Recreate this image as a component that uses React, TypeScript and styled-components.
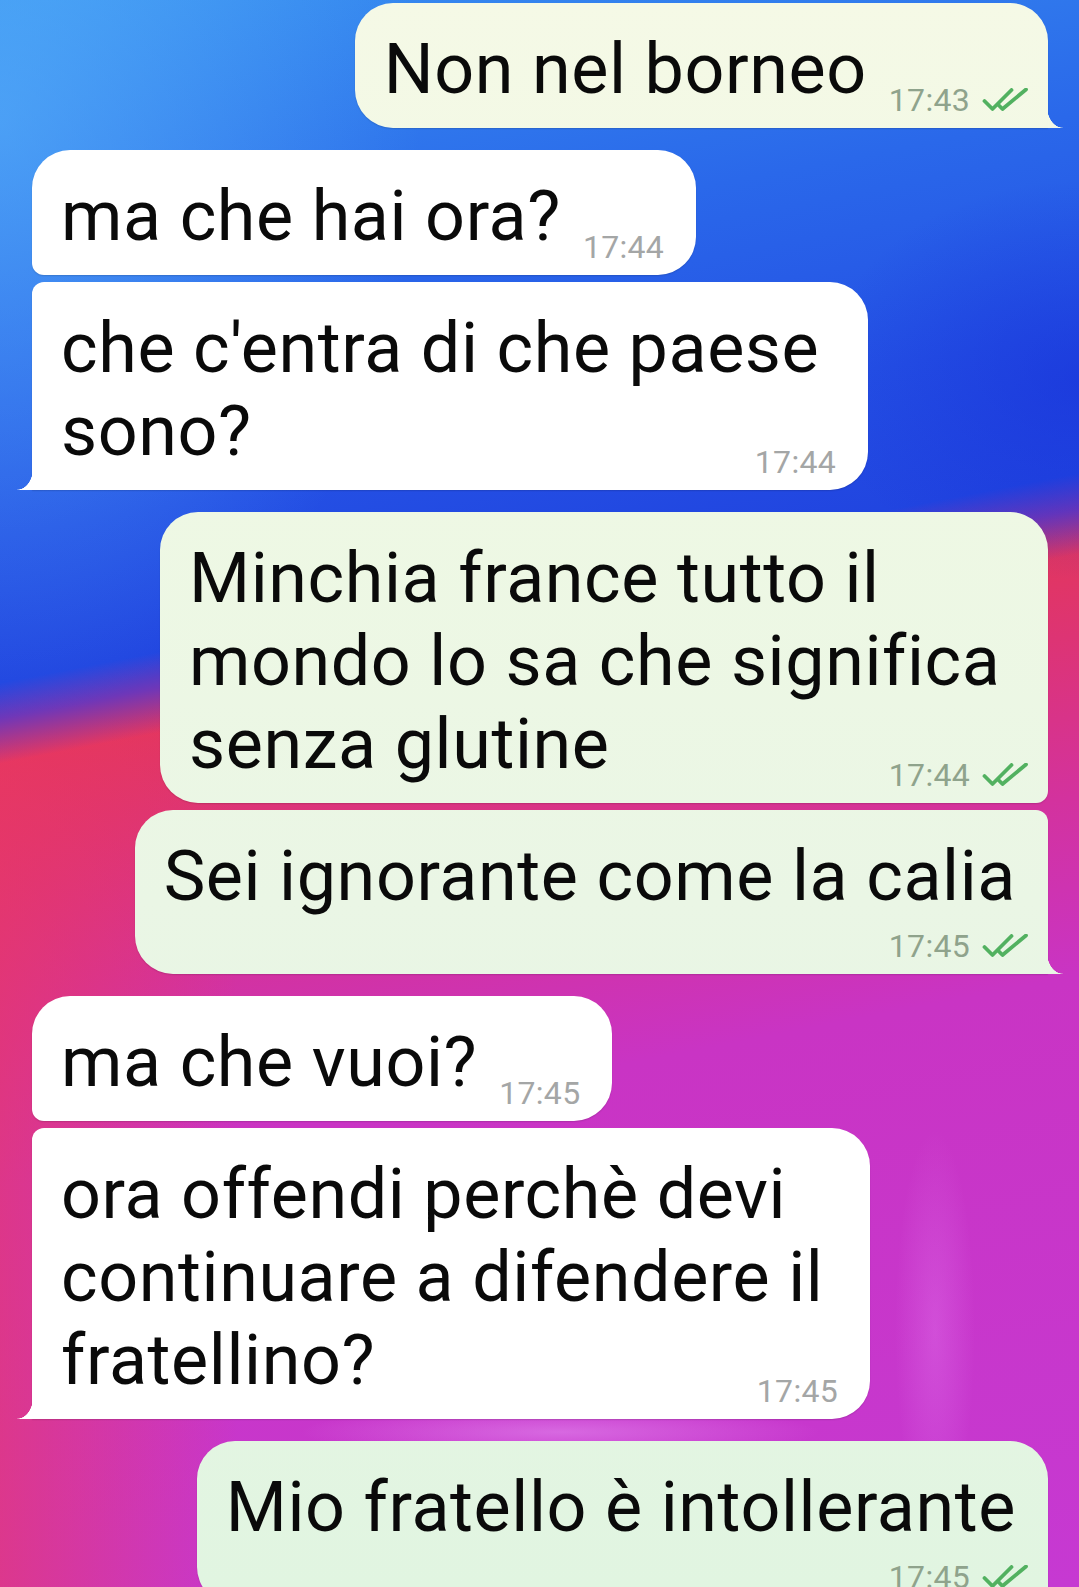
import React from "react";
import styled, { createGlobalStyle, css } from "styled-components";

type Side = "in" | "out";
type Layout = "inline" | "tuck" | "below";
type Pos = "single" | "first" | "last";

interface Msg {
  lines: string[];
  time: string;
  layout: Layout;
  width?: number;
}
interface Group {
  side: Side;
  messages: Msg[];
}

const groups: Group[] = [
  { side: "out", messages: [{ lines: ["Non nel borneo"], time: "17:43", layout: "inline" }] },
  {
    side: "in",
    messages: [
      { lines: ["ma che hai ora?"], time: "17:44", layout: "inline" },
      { lines: ["che c'entra di che paese", "sono?"], time: "17:44", layout: "tuck", width: 836 },
    ],
  },
  {
    side: "out",
    messages: [
      {
        lines: ["Minchia france tutto il", "mondo lo sa che significa", "senza glutine"],
        time: "17:44",
        layout: "tuck",
        width: 888,
      },
      { lines: ["Sei ignorante come la calia"], time: "17:45", layout: "below" },
    ],
  },
  {
    side: "in",
    messages: [
      { lines: ["ma che vuoi?"], time: "17:45", layout: "inline" },
      {
        lines: ["ora offendi perchè devi", "continuare a difendere il", "fratellino?"],
        time: "17:45",
        layout: "tuck",
        width: 838,
      },
    ],
  },
  { side: "out", messages: [{ lines: ["Mio fratello è intollerante"], time: "17:45", layout: "below" }] },
];

const OUT_BG = "linear-gradient(180deg, #f5f9e6 0px, #eef8e4 500px, #eaf6e5 900px, #e1f5e1 1587px) fixed";
const IN_BG = "#ffffff";
const BIG = 38;
const SMALL = 12;

const GlobalStyle = createGlobalStyle`
  html, body { margin: 0; padding: 0; }
  body { font-family: Roboto, "Liberation Sans", Arial, sans-serif; }
  * { box-sizing: border-box; }
`;

const Page = styled.div`
  height: 1587px;
  overflow: hidden;
  background:
    radial-gradient(420px 600px at 0px 120px, rgba(95, 185, 252, 0.55), rgba(95, 185, 252, 0) 100%),
    radial-gradient(260px 200px at 1079px 380px, rgba(20, 40, 215, 0.45), rgba(20, 40, 215, 0) 100%),
    radial-gradient(40px 200px at 935px 1330px, rgba(235, 140, 250, 0.28), rgba(235, 140, 250, 0) 100%),
    radial-gradient(260px 26px at 560px 1432px, rgba(235, 165, 250, 0.45), rgba(235, 165, 250, 0) 100%),
    linear-gradient(169deg, #3890f0 0%, #2a68ea 18%, #2450e4 30%, #2145e0 38%, rgba(90, 55, 200, 0.85) 40%, rgba(90, 55, 200, 0) 42.5%),
    linear-gradient(90deg, rgba(234, 56, 98, 0.6) 0%, rgba(234, 56, 98, 0) 22%),
    linear-gradient(169deg, #e3365a 0%, #e3365a 41%, #dd3474 47%, #d3329e 56%, #c934c4 66%, #c639d2 100%);
`;

const Thread = styled.div`
  display: flex;
  flex-direction: column;
  gap: 22px;
  padding: 3px 31px 0 32px;
`;

const GroupBox = styled.div<{ $side: Side }>`
  display: flex;
  flex-direction: column;
  gap: 7px;
  align-items: ${(p) => (p.$side === "out" ? "flex-end" : "flex-start")};
`;

const radius = (side: Side, pos: Pos) => {
  const leadTop = pos === "first" || pos === "single" ? BIG : SMALL;
  const leadBottom = pos === "last" || pos === "single" ? 0 : SMALL;
  if (side === "out") {
    return `${BIG}px ${leadTop}px ${leadBottom}px ${BIG}px`;
  }
  return `${leadTop}px ${BIG}px ${BIG}px ${leadBottom}px`;
};

const Bubble = styled.div<{ $side: Side; $pos: Pos; $width?: number }>`
  position: relative;
  width: ${(p) => (p.$width ? `${p.$width}px` : "max-content")};
  padding: 25px 32px 17px 29px;
  background: ${(p) => (p.$side === "out" ? OUT_BG : IN_BG)};
  border-radius: ${(p) => radius(p.$side, p.$pos)};
  box-shadow: 0 1px 1.5px rgba(0, 0, 0, 0.14);

  ${(p) =>
    (p.$pos === "last" || p.$pos === "single") &&
    css`
      &::after {
        content: "";
        position: absolute;
        bottom: 0;
        width: 16px;
        height: 21px;
        ${p.$side === "out" ? "right: -15px;" : "left: -15px;"}
        background: ${p.$side === "out" ? OUT_BG : IN_BG};
        -webkit-mask-image: radial-gradient(
          16px 21px at ${p.$side === "out" ? "100% 0" : "0 0"},
          transparent 97%,
          #000 100%
        );
        mask-image: radial-gradient(
          16px 21px at ${p.$side === "out" ? "100% 0" : "0 0"},
          transparent 97%,
          #000 100%
        );
      }
    `}
`;

const Body = styled.div<{ $layout: Layout }>`
  display: flex;
  flex-direction: ${(p) => (p.$layout === "inline" ? "row" : "column")};
  align-items: flex-end;
  column-gap: 22px;
`;

const Text = styled.div`
  flex: none;
  align-self: stretch;
  font-size: 70px;
  line-height: 83px;
  letter-spacing: 0.6px;
  color: #0a0a0a;
`;

const Line = styled.span`
  display: block;
  white-space: nowrap;
`;

const Meta = styled.div<{ $side: Side; $layout: Layout }>`
  flex: none;
  display: flex;
  align-items: center;
  gap: 12px;
  height: 22px;
  margin-top: ${(p) => (p.$layout === "tuck" ? "-22px" : p.$layout === "below" ? "17px" : "0")};
  margin-right: ${(p) => (p.$side === "out" ? "-12px" : "0")};
`;

const Time = styled.span<{ $side: Side }>`
  font-size: 32px;
  line-height: 22px;
  letter-spacing: 0.3px;
  color: ${(p) => (p.$side === "out" ? "#8fa38c" : "#a4a6a6")};
`;

const Ticks = () => (
  <svg width="46" height="24" viewBox="0 0 46 24" fill="none" stroke="#52b160" strokeWidth="3.8" strokeLinecap="round" strokeLinejoin="round">
    <path d="M2.5 13 L10.5 21 L29.5 2" />
    <path d="M17 17.5 L20.5 21 L44 1.5" />
  </svg>
);

const posOf = (i: number, n: number): Pos => (n === 1 ? "single" : i === n - 1 ? "last" : "first");

export default function App() {
  return (
    <>
      <GlobalStyle />
      <Page>
        <Thread>
          {groups.map((g, gi) => (
            <GroupBox key={gi} $side={g.side}>
              {g.messages.map((m, mi) => (
                <Bubble key={mi} $side={g.side} $pos={posOf(mi, g.messages.length)} $width={m.width}>
                  <Body $layout={m.layout}>
                    <Text>
                      {m.lines.map((l, li) => (
                        <Line key={li}>{l}</Line>
                      ))}
                    </Text>
                    <Meta $side={g.side} $layout={m.layout}>
                      <Time $side={g.side}>{m.time}</Time>
                      {g.side === "out" && <Ticks />}
                    </Meta>
                  </Body>
                </Bubble>
              ))}
            </GroupBox>
          ))}
        </Thread>
      </Page>
    </>
  );
}
